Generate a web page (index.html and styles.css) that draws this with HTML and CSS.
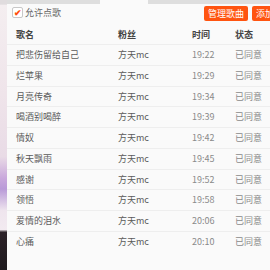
FILE: index.html
```html
<!DOCTYPE html>
<html lang="zh">
<head>
    <meta charset="UTF-8">
    <title>点歌列表</title>
    <link rel="stylesheet" href="styles.css">
</head>
<body>
    <div class="side"></div>
    <div class="panel">
        <div class="tabs">
            <div class="tab"></div>
            <div class="tab tab-right"></div>
        </div>
        <div class="toolbar">
            <label class="allow">
                <span class="check">&#10004;</span>
                允许点歌
            </label>
            <div class="actions">
                <button class="btn">管理歌曲</button>
                <button class="btn">添加歌曲</button>
            </div>
        </div>
        <table class="songs">
            <thead>
                <tr>
                    <th class="c-name">歌名</th>
                    <th class="c-fan">粉丝</th>
                    <th class="c-time">时间</th>
                    <th class="c-state">状态</th>
                </tr>
            </thead>
            <tbody>
                <tr><td>把悲伤留给自己</td><td>方天mc</td><td class="muted">19:22</td><td class="muted">已同意</td></tr>
                <tr><td>烂苹果</td><td>方天mc</td><td class="muted">19:29</td><td class="muted">已同意</td></tr>
                <tr><td>月亮传奇</td><td>方天mc</td><td class="muted">19:34</td><td class="muted">已同意</td></tr>
                <tr><td>喝酒别喝醉</td><td>方天mc</td><td class="muted">19:39</td><td class="muted">已同意</td></tr>
                <tr><td>情奴</td><td>方天mc</td><td class="muted">19:42</td><td class="muted">已同意</td></tr>
                <tr><td>秋天飘雨</td><td>方天mc</td><td class="muted">19:45</td><td class="muted">已同意</td></tr>
                <tr><td>感谢</td><td>方天mc</td><td class="muted">19:52</td><td class="muted">已同意</td></tr>
                <tr><td>领悟</td><td>方天mc</td><td class="muted">19:58</td><td class="muted">已同意</td></tr>
                <tr><td>爱情的泪水</td><td>方天mc</td><td class="muted">20:06</td><td class="muted">已同意</td></tr>
                <tr><td>心痛</td><td>方天mc</td><td class="muted">20:10</td><td class="muted">已同意</td></tr>
            </tbody>
        </table>
    </div>
</body>
</html>
```

FILE: styles.css
```css
body {
    margin: 0;
    width: 270px;
    height: 270px;
    overflow: hidden;
    display: flex;
    font-family: 'Noto Sans CJK SC', 'Microsoft YaHei', sans-serif;
    font-size: 9px;
    color: #5a5a5a;
    background: #f8f8f8;
}

.side {
    width: 7px;
    flex-shrink: 0;
    background: linear-gradient(180deg, #e0dcde 0%, #e0dcde 1.5%, #f4eef0 2%, #efe4ea 35%, #e9dbe6 58%, #c9a8dc 66%, #b99ad8 70%, #efe5ee 78%, #f2eaf0 85%, #2c2228 86%, #1e1a1e 100%);
}

.panel {
    flex: 1;
    min-width: 0;
    overflow: hidden;
    background: #fafafa;
}

.tabs {
    display: flex;
    justify-content: space-between;
    height: 4px;
}

.tab {
    width: 93px;
    background: #dedede;
}

.tab-right {
    width: 122px;
}

.toolbar {
    display: flex;
    align-items: center;
    justify-content: space-between;
    height: 18px;
    padding: 1px 0 0 5px;
}

.allow {
    display: flex;
    align-items: center;
    gap: 2px;
    color: #666;
    margin-top: -3px;
}

.check {
    width: 9px;
    height: 9px;
    border: 1px solid #c8c8c8;
    border-radius: 2px;
    background: #fff;
    color: #ff4e0a;
    font-size: 9px;
    font-weight: bold;
    line-height: 9px;
    text-align: center;
}

.actions {
    display: flex;
    gap: 4px;
    margin-top: -1px;
    margin-right: -26px;
}

.btn {
    background: #ff5410;
    color: #fff;
    border: none;
    border-radius: 2px;
    font-family: inherit;
    font-size: 9px;
    height: 15px;
    padding: 0 4px;
    white-space: nowrap;
}

.songs {
    width: 100%;
    border-collapse: separate;
    border-spacing: 0;
    margin-top: 2px;
}

.songs th,
.songs td {
    text-align: left;
    padding: 0;
    line-height: 19.75px;
    border-bottom: 1px solid #eeeeee;
    white-space: nowrap;
}

.songs th {
    font-weight: bold;
    color: #444;
    line-height: 19px;
}

.c-name { width: 102px; }
.c-fan { width: 74px; }
.c-time { width: 43px; }

.songs th:first-child,
.songs td:first-child {
    padding-left: 9px;
}

.muted {
    color: #8a8a8a;
}

.songs tbody tr:last-child td {
    border-bottom: none;
}
```
